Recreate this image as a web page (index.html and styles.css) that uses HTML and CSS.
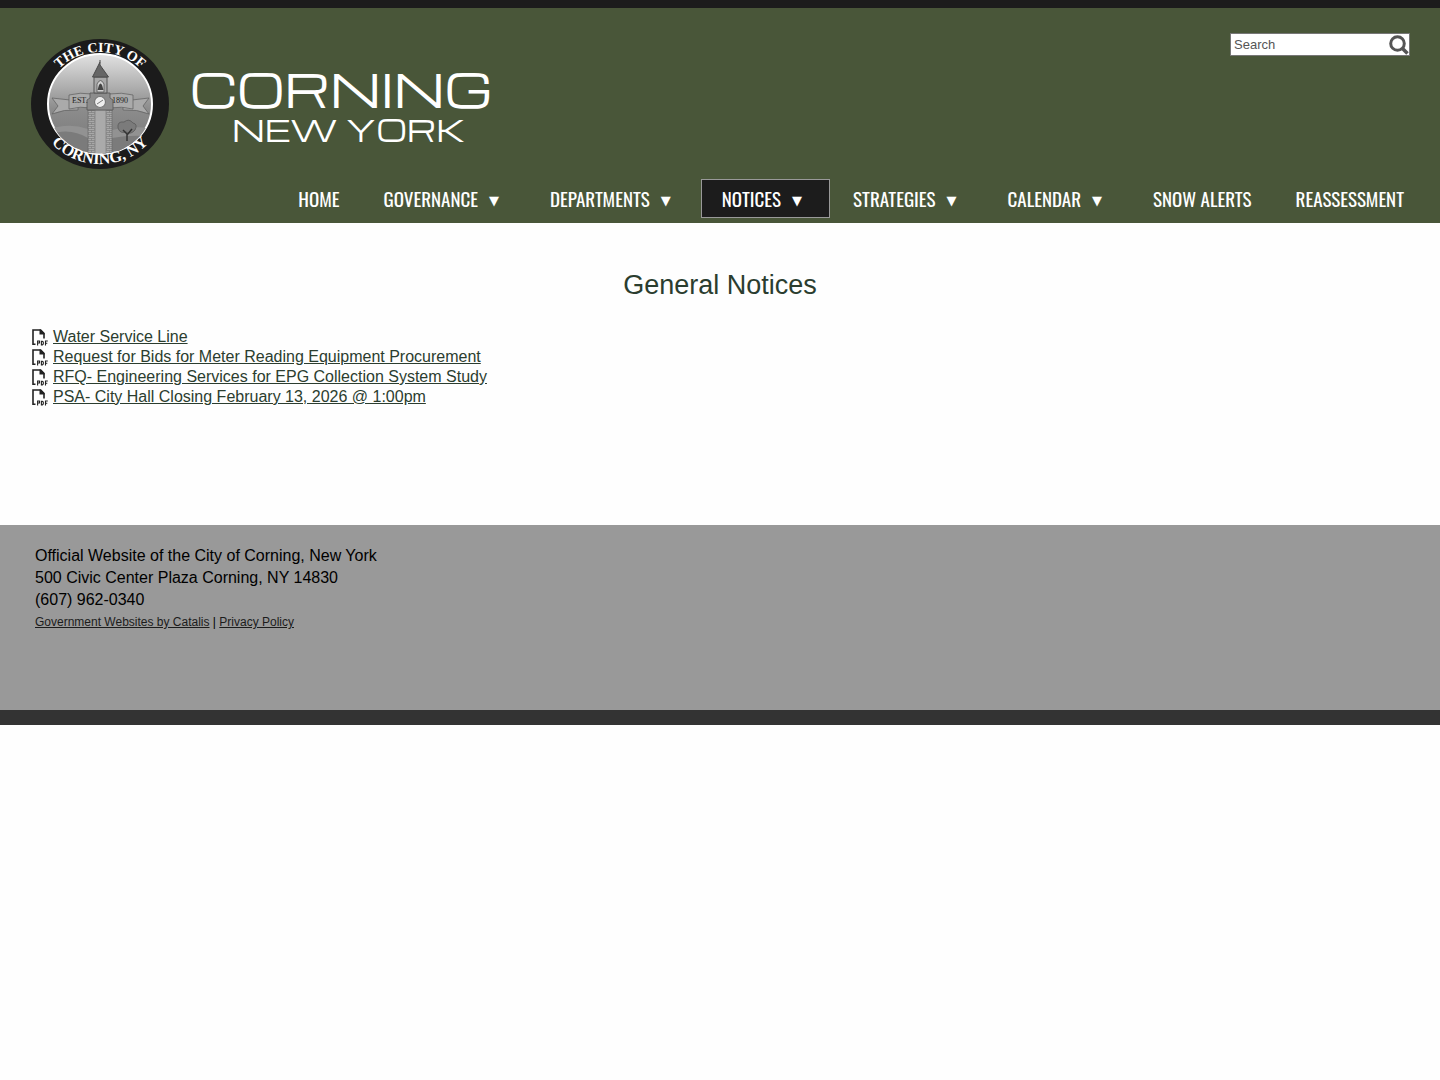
FILE: index.html
```
<!DOCTYPE html>
<html lang="en">
<head>
	<meta charset="utf-8">
	<meta name="viewport" content="width=device-width, initial-scale=1">
	<title>General Notices - City of Corning, New York</title>
	<link rel="stylesheet" href="styles.css">
</head>
<body>

<svg width="0" height="0" class="defs" aria-hidden="true">
	<symbol id="pdf" viewBox="0 0 16 17">
		<path d="M3.5 15.2H1V1H8.500L12 4.500V9.500" fill="none" stroke="#222" stroke-width="1.6"/>
		<path d="M7.500 .5V5.500H12.500V4L9 .5Z" fill="#222"/>
		<path d="M5.600 16.500V12H7.500V14H5.600M9.400 12.200V16H10.300L11.300 15V13L10.300 12.200ZM13.500 16.500V12H15.800M13.500 14.200H15.300" fill="none" stroke="#222" stroke-width="1.100"/>
	</symbol>
</svg>

<header class="header">
	<div class="top">
		<a class="brand" href="#" aria-label="City of Corning, New York">
			<svg class="seal" width="140" height="132" viewBox="0 0 140 132">
				<defs>
					<linearGradient id="sky" x1="0" y1="0" x2="0" y2="1">
						<stop offset="0" stop-color="#e2e2e2"/>
						<stop offset=".55" stop-color="#8c8c8c"/>
						<stop offset="1" stop-color="#777"/>
					</linearGradient>
					<pattern id="brick" width="6" height="4" patternUnits="userSpaceOnUse">
						<rect width="6" height="4" fill="#a8a8a8"/>
						<path d="M0 .5H6M0 2.500H6M1.500 .5V2.500M4.500 2.500V4.500" stroke="#777" stroke-width=".6"/>
					</pattern>
					<clipPath id="inner"><ellipse cx="70" cy="66" rx="52" ry="50"/></clipPath>
					<path id="arc-top" d="M14 66A56 52 0 0 1 126 66"/>
					<path id="arc-bottom" d="M6 66A64 60 0 0 0 134 66"/>
				</defs>
				<ellipse cx="70" cy="66" rx="69" ry="65" fill="#1b1b1b"/>
				<ellipse cx="70" cy="66" rx="52" ry="50" fill="url(#sky)" stroke="#fff" stroke-width="2"/>
				<g clip-path="url(#inner)">
					<path d="M17 92Q38 84 58 91L82 92Q105 86 124 92V120H17Z" fill="#929292"/>
					<path d="M17 98Q38 88 58 100V120H17ZM82 100Q104 96 124 99V120H82Z" fill="#7b7b7b"/>
					<g fill="#aaa" stroke="#666" stroke-width=".8">
						<path d="M40 62L22 60 28 68 22 76Q34 71 48 72V69H40Z"/>
						<path d="M102 62L119 60 113 68 119 76Q107 71 93 72V69H102Z"/>
						<path d="M39 57Q50 54 62 56V70Q50 68 39 71Z"/>
						<path d="M103 57Q92 54 79 56V70Q92 68 103 71Z"/>
					</g>
					<path d="M58 72H82V120H58Z" fill="url(#brick)" stroke="#666" stroke-width=".6"/>
					<path d="M65 72H76V120H65Z" fill="#aaa" stroke="#888"/>
					<path d="M60 55H80V60L83 62V72H57V62L60 60Z" fill="#8c8c8c" stroke="#555" stroke-width=".8"/>
					<path d="M64 39H77V55H64Z" fill="#a8a8a8" stroke="#555"/>
					<path d="M67 54V46Q70.500 39 74 46V54Z" fill="#d0d0d0" stroke="#555" stroke-width=".8"/>
					<path d="M67.500 52L69 47Q70.500 44 72 47L73.500 52Z" fill="#444"/>
					<path d="M70 22V27L78.500 39H62.500L70 24" fill="#666" stroke="#4a4a4a"/>
					<circle cx="70" cy="64" r="5.500" fill="#eee" stroke="#777" stroke-width="1.200"/>
					<path d="M67 66L73 62" stroke="#777"/>
					<path d="M88 90Q87 83 94 84Q99 80 103 85Q108 86 105 92Q101 97 96 94Q90 96 88 90Z" fill="#7b7b7b" stroke="#5b5b5b" stroke-width=".8"/>
					<path d="M97 103V96L93 92M97 97L102 91" fill="none" stroke="#333" stroke-width="1.500"/>
				</g>
				<text class="est" x="42" y="65">EST.</text>
				<text class="est" x="82" y="65">1890</text>
				<text class="ring ring-top"><textPath href="#arc-top" startOffset="50%">THE CITY OF</textPath></text>
				<text class="ring ring-bottom"><textPath href="#arc-bottom" startOffset="50%">CORNING, NY</textPath></text>
			</svg>
			<span class="wordmark">
				<span class="city">CORNING</span>
				<span class="state">NEW YORK</span>
			</span>
		</a>
		<form class="search" action="#">
			<input type="text" placeholder="Search" aria-label="Search">
			<button type="submit" aria-label="Search">
				<svg width="20" height="20" viewBox="0 0 20 20" fill="none" stroke="#555">
					<circle cx="8.500" cy="8.500" r="6.800" stroke-width="3"/>
					<path d="M13.500 13.500L18.500 18.500" stroke-width="3.500"/>
				</svg>
			</button>
		</form>
	</div>
	<nav class="menu">
		<a href="#">Home</a>
		<a href="#" class="sub">Governance</a>
		<a href="#" class="sub">Departments</a>
		<a href="#" class="sub active">Notices</a>
		<a href="#" class="sub">Strategies</a>
		<a href="#" class="sub">Calendar</a>
		<a href="#">Snow Alerts</a>
		<a href="#">Reassessment</a>
	</nav>
</header>

<main class="content">
	<h1>General Notices</h1>
	<ul class="notices">
		<li><svg><use href="#pdf"/></svg><a href="#">Water Service Line</a></li>
		<li><svg><use href="#pdf"/></svg><a href="#">Request for Bids for Meter Reading Equipment Procurement</a></li>
		<li><svg><use href="#pdf"/></svg><a href="#">RFQ- Engineering Services for EPG Collection System Study</a></li>
		<li><svg><use href="#pdf"/></svg><a href="#">PSA- City Hall Closing February 13, 2026 @ 1:00pm</a></li>
	</ul>
</main>

<footer class="footer">
	<p>Official Website of the City of Corning, New York</p>
	<p>500 Civic Center Plaza Corning, NY 14830</p>
	<p>(607) 962-0340</p>
	<p class="small"><a href="#">Government Websites by Catalis</a> | <a href="#">Privacy Policy</a></p>
</footer>

</body>
</html>
```
FILE: styles.css
```
* {
	box-sizing: border-box;
}
body {
	margin: 0;
	background: #fefefe;
	color: #000;
	font: 16px/22px "Liberation Sans", Arial, sans-serif;
}
.defs {
	position: absolute;
}

/* header */
.header {
	padding-bottom: 5px;
	border-top: 8px solid #1c1c1c;
	background: #495639;
}
.top {
	display: flex;
	justify-content: space-between;
	align-items: flex-start;
	padding: 25px 30px 0;
}
.brand {
	display: flex;
	gap: 20px;
	margin-top: 5px;
	color: #fff;
	text-decoration: none;
}
.seal {
	display: block;
}
.est {
	font: 8px "Liberation Serif", serif;
	fill: #222;
}
.ring {
	font-family: "Liberation Serif", serif;
	font-weight: bold;
	text-anchor: middle;
	fill: #fff;
}
.ring-top {
	font-size: 14px;
}
.ring-bottom {
	font-size: 16px;
}
.wordmark {
	display: flex;
	flex-direction: column;
	gap: 8px;
	padding-top: 32px;
	font-family: Michroma, "DejaVu Sans", sans-serif;
}
.city {
	font-size: 45px;
	line-height: 36px;
}
.state {
	padding-left: 42px;
	font-size: 29px;
	line-height: 30px;
}
.search {
	display: flex;
	align-items: center;
	width: 180px;
	height: 23px;
	border: 1px solid #777;
	background: #fff;
}
.search input {
	flex: 1;
	min-width: 0;
	padding: 0 3px;
	border: 0;
	background: none;
	font: 13px "Liberation Sans", Arial, sans-serif;
}
.search input::placeholder {
	color: #555;
}
.search button {
	padding: 0;
	border: 0;
	background: none;
}
.search svg {
	display: block;
}

/* menu */
.menu {
	display: flex;
	flex-wrap: wrap;
	justify-content: flex-end;
	gap: 2px;
	margin-top: 9px;
	padding-right: 15px;
}
.menu a {
	padding: 0 20px;
	border: 1px solid transparent;
	color: #fff;
	font: 19px/37px Oswald, "Roboto Condensed", sans-serif;
	text-decoration: none;
	text-transform: uppercase;
}
.menu .sub::after {
	content: "▼";
	margin: 0 7px 0 11px;
	font: 13px/13px "DejaVu Sans", sans-serif;
	vertical-align: 2px;
}
.menu .active {
	border-color: #999;
	background: #1c1c1c;
}

/* content */
.content {
	padding: 46px 32px 118px;
}
h1 {
	margin: 0 0 26px;
	color: #2b3d2f;
	font-size: 27px;
	font-weight: normal;
	line-height: 32px;
	text-align: center;
}
.notices {
	margin: 0;
	padding: 0;
	list-style: none;
}
.notices li {
	display: flex;
	align-items: center;
	gap: 5px;
	line-height: 20px;
}
.notices svg {
	width: 16px;
	height: 17px;
}
.notices a {
	color: #2b3d2f;
}

/* footer */
.footer {
	min-height: 200px;
	padding: 20px 35px;
	border-bottom: 15px solid #333;
	background: #999;
}
.footer p {
	margin: 0;
}
.footer .small {
	font-size: 12px;
}
.footer a {
	color: #1c1c1c;
}
```
